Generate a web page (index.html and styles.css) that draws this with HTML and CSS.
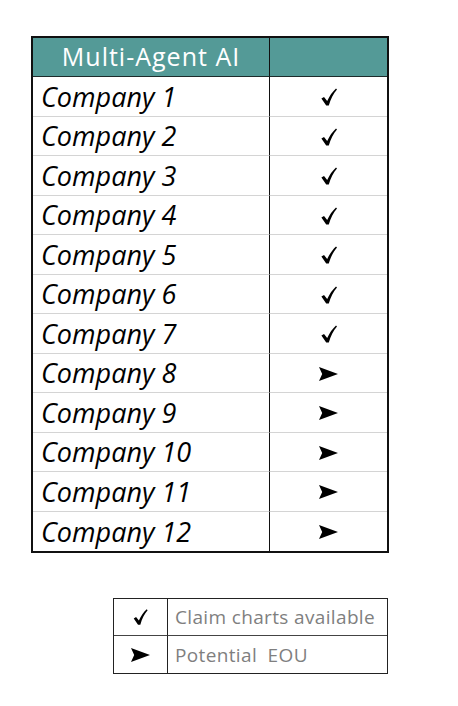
FILE: index.html
```html
<!DOCTYPE html>
<html>
<head>
<meta charset="utf-8">
<link rel="stylesheet" href="styles.css">
</head>
<body>
<div class="page">
  <div class="table">
    <div class="head name">Multi-Agent AI</div>
    <div class="head mark"></div>

    <div class="cell name">Company 1</div><div class="cell mark"><svg class="check" viewBox="0 0 16 18"><path d="M0.4 10.6 L3 9 L6.2 13 C8.5 7.8 11.4 3.8 15 0.4 L16 1.4 C12.4 5.6 9.8 10.6 7.8 17.6 L5.2 17.6 Z"/></svg></div>
    <div class="cell name">Company 2</div><div class="cell mark"><svg class="check" viewBox="0 0 16 18"><path d="M0.4 10.6 L3 9 L6.2 13 C8.5 7.8 11.4 3.8 15 0.4 L16 1.4 C12.4 5.6 9.8 10.6 7.8 17.6 L5.2 17.6 Z"/></svg></div>
    <div class="cell name">Company 3</div><div class="cell mark"><svg class="check" viewBox="0 0 16 18"><path d="M0.4 10.6 L3 9 L6.2 13 C8.5 7.8 11.4 3.8 15 0.4 L16 1.4 C12.4 5.6 9.8 10.6 7.8 17.6 L5.2 17.6 Z"/></svg></div>
    <div class="cell name">Company 4</div><div class="cell mark"><svg class="check" viewBox="0 0 16 18"><path d="M0.4 10.6 L3 9 L6.2 13 C8.5 7.8 11.4 3.8 15 0.4 L16 1.4 C12.4 5.6 9.8 10.6 7.8 17.6 L5.2 17.6 Z"/></svg></div>
    <div class="cell name">Company 5</div><div class="cell mark"><svg class="check" viewBox="0 0 16 18"><path d="M0.4 10.6 L3 9 L6.2 13 C8.5 7.8 11.4 3.8 15 0.4 L16 1.4 C12.4 5.6 9.8 10.6 7.8 17.6 L5.2 17.6 Z"/></svg></div>
    <div class="cell name">Company 6</div><div class="cell mark"><svg class="check" viewBox="0 0 16 18"><path d="M0.4 10.6 L3 9 L6.2 13 C8.5 7.8 11.4 3.8 15 0.4 L16 1.4 C12.4 5.6 9.8 10.6 7.8 17.6 L5.2 17.6 Z"/></svg></div>
    <div class="cell name">Company 7</div><div class="cell mark"><svg class="check" viewBox="0 0 16 18"><path d="M0.4 10.6 L3 9 L6.2 13 C8.5 7.8 11.4 3.8 15 0.4 L16 1.4 C12.4 5.6 9.8 10.6 7.8 17.6 L5.2 17.6 Z"/></svg></div>
    <div class="cell name">Company 8</div><div class="cell mark"><svg class="arrow" viewBox="0 0 19 14"><path d="M0 0 L19 7 L0 14 L3.2 7 Z"/></svg></div>
    <div class="cell name">Company 9</div><div class="cell mark"><svg class="arrow" viewBox="0 0 19 14"><path d="M0 0 L19 7 L0 14 L3.2 7 Z"/></svg></div>
    <div class="cell name">Company 10</div><div class="cell mark"><svg class="arrow" viewBox="0 0 19 14"><path d="M0 0 L19 7 L0 14 L3.2 7 Z"/></svg></div>
    <div class="cell name">Company 11</div><div class="cell mark"><svg class="arrow" viewBox="0 0 19 14"><path d="M0 0 L19 7 L0 14 L3.2 7 Z"/></svg></div>
    <div class="cell name last">Company 12</div><div class="cell mark last"><svg class="arrow" viewBox="0 0 19 14"><path d="M0 0 L19 7 L0 14 L3.2 7 Z"/></svg></div>
  </div>

  <div class="legend">
    <div class="lcell icon"><svg class="check small" viewBox="0 0 16 18"><path d="M0.4 10.6 L3 9 L6.2 13 C8.5 7.8 11.4 3.8 15 0.4 L16 1.4 C12.4 5.6 9.8 10.6 7.8 17.6 L5.2 17.6 Z"/></svg></div>
    <div class="lcell text">Claim charts available</div>
    <div class="lcell icon last"><svg class="arrow" viewBox="0 0 19 14"><path d="M0 0 L19 7 L0 14 L3.2 7 Z"/></svg></div>
    <div class="lcell text last">Potential&nbsp; EOU</div>
  </div>
</div>
</body>
</html>
```
FILE: styles.css
```css
html, body {
  margin: 0;
  padding: 0;
  background: #ffffff;
}

.page {
  padding: 36px 0 0 31px;
  font-family: "Open Sans", "Liberation Sans", sans-serif;
}

.table {
  display: grid;
  grid-template-columns: 237px 117px;
  grid-template-rows: 39px repeat(12, 39.5px);
  width: 354px;
  border: 2px solid #111;
}

.head {
  background: #549a97;
  color: #ffffff;
  font-size: 25px;
  letter-spacing: 1px;
  display: flex;
  align-items: center;
  justify-content: center;
  border-bottom: 1.5px solid #1d2b2b;
}

.head.name {
  border-right: 1.5px solid #111;
  padding-bottom: 2px;
}

.cell {
  display: flex;
  align-items: center;
  border-bottom: 1px solid #d4d4d4;
}

.cell.last {
  border-bottom: none;
}

.cell.name {
  font-style: italic;
  font-size: 27px;
  color: #000;
  padding-left: 8px;
  border-right: 1.5px solid #111;
}

.cell.mark {
  justify-content: center;
  padding-top: 2px;
}

.check {
  width: 16px;
  height: 18px;
  fill: #000;
}

.check.small {
  width: 15px;
  height: 16px;
}

.arrow {
  width: 19px;
  height: 14px;
  fill: #000;
}

.legend {
  margin: 45px 0 0 82px;
  display: grid;
  grid-template-columns: 54px 219px;
  grid-template-rows: 37px 37px;
  width: 273px;
  border: 1.5px solid #222;
}

.lcell {
  display: flex;
  align-items: center;
  border-bottom: 1px solid #444;
}

.lcell.last {
  border-bottom: none;
}

.lcell.icon {
  justify-content: center;
  border-right: 1.5px solid #222;
}

.lcell.text {
  padding-left: 7px;
  font-size: 19px;
  color: #7f7f7f;
  letter-spacing: 0.35px;
}
```
